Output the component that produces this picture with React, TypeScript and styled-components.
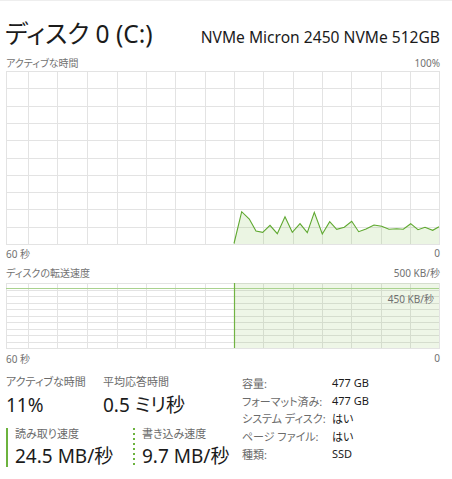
import React from "react";
import styled, { createGlobalStyle } from "styled-components";

const GlobalStyle = createGlobalStyle`
  html, body { margin: 0; padding: 0; background: #ffffff; }
  body {
    font-family: "Noto Sans", "Noto Sans CJK JP", sans-serif;
    font-feature-settings: "palt";
    color: #1b1b1b;
  }
`;

const GREEN = "#5ea82f";
const GREEN_BAR = "#6cb33e";
const GRID = "#e3e3e3";

const Page = styled.div`
  width: 452px;
  height: 479px;
  box-sizing: border-box;
  border-top: 1px solid #eeeeee;
  padding: 0 12px 0 6px;
  overflow: hidden;
`;

const Header = styled.div`
  height: 53px;
  box-sizing: border-box;
  padding-top: 16px;
  display: flex;
  justify-content: space-between;
  align-items: baseline;
`;

const Title = styled.div`
  font-size: 24.5px;
  line-height: 33px;
  margin-left: -1px;
`;

const Model = styled.div`
  font-size: 15.6px;
  line-height: 20px;
`;

const CaptionRow = styled.div<{ $h: number }>`
  height: ${(p) => p.$h}px;
  display: flex;
  justify-content: space-between;
  align-items: center;
  font-size: 10px;
  color: #717171;
`;

const ChartBox = styled.div<{ $h: number }>`
  position: relative;
  width: 434px;
  height: ${(p) => p.$h}px;
`;

const ChartSvg = styled.svg`
  display: block;
`;

const Overlay = styled.div`
  position: absolute;
  right: 6px;
  top: 9px;
  font-size: 10px;
  line-height: 14px;
  color: #707070;
`;

const Stats = styled.div`
  display: grid;
  grid-template-columns: 236px 1fr;
  padding-top: 6px;
`;

const LeftStats = styled.div`
  display: flex;
  flex-direction: column;
`;

const StatRow = styled.div<{ $first: number; $mt: number }>`
  display: grid;
  grid-template-columns: ${(p) => p.$first}px 1fr;
  margin-top: ${(p) => p.$mt}px;
`;

const Stat = styled.div<{ $bar?: "solid" | "dotted" }>`
  display: flex;
  flex-direction: column;
  ${(p) =>
    p.$bar
      ? `
    height: 39px;
    padding-left: 9px;
    background-image: ${
      p.$bar === "solid"
        ? `linear-gradient(${GREEN_BAR}, ${GREEN_BAR})`
        : `linear-gradient(to bottom, ${GREEN_BAR} 50%, transparent 50%)`
    };
    background-repeat: repeat-y;
    background-position: left top;
    background-size: ${p.$bar === "solid" ? "2px 100%" : "2px 5px"};
  `
      : ""}
`;

const StatLabel = styled.div<{ $lh: number }>`
  font-size: 11px;
  line-height: ${(p) => p.$lh}px;
  color: #6b6b6b;
  white-space: nowrap;
`;

const StatValue = styled.div<{ $lh: number }>`
  font-size: 19px;
  line-height: ${(p) => p.$lh}px;
  color: #1b1b1b;
  white-space: nowrap;
`;

const InfoGrid = styled.div`
  display: grid;
  grid-template-columns: 90px 1fr;
  grid-auto-rows: 17.7px;
  align-items: center;
  font-size: 11px;
  padding-top: 1px;
`;

const InfoKey = styled.div`
  color: #6b6b6b;
  white-space: nowrap;
`;

const InfoVal = styled.div`
  color: #1b1b1b;
  white-space: nowrap;
`;

const VLINES = [22, 51, 81, 111, 140, 169, 199, 228, 257, 287, 316, 345, 375, 404];

const RAW: [number, number][] = [
  [234, 243.5], [241.7, 211.7], [249.3, 219], [256, 231], [262.7, 232.3],
  [270, 225.3], [277.3, 233.7], [285, 216.7], [292.3, 232.3], [300, 223.7],
  [307.3, 232.7], [314.3, 212.3], [322.3, 234], [329.7, 221.7], [336.7, 229.3],
  [344.3, 227.3], [351.7, 221.3], [358.7, 231.7], [366, 229], [374, 225],
  [381.7, 226.3], [389, 229.3], [396.7, 228.7], [403.3, 229.3], [410.7, 223.7],
  [418, 229.7], [425, 227.3], [432.7, 230.3], [439, 226.7],
];

const Grid: React.FC<{ w: number; h: number; rows: number }> = ({ w, h, rows }) => {
  const step = (h - 1) / rows;
  return (
    <g stroke={GRID} strokeWidth={1} shapeRendering="crispEdges">
      {VLINES.map((x) => (
        <line key={`v${x}`} x1={x + 0.5} y1={0} x2={x + 0.5} y2={h} />
      ))}
      {Array.from({ length: rows - 1 }, (_, i) => {
        const y = Math.round(step * (i + 1)) + 0.5;
        return <line key={`h${i}`} x1={0} y1={y} x2={w} y2={y} />;
      })}
      <rect x={0.5} y={0.5} width={w - 1} height={h - 1} fill="none" />
    </g>
  );
};

const ActiveChart: React.FC = () => {
  const w = 434;
  const h = 174;
  const pts = RAW.map(([x, y]) => [x - 6, y - 71] as [number, number]);
  const line = pts.map(([x, y]) => `${x},${y}`).join(" ");
  const area = `${pts[0][0]},${h - 1} ${line} ${pts[pts.length - 1][0]},${h - 1}`;
  return (
    <ChartBox $h={h}>
      <ChartSvg width={w} height={h}>
        <Grid w={w} h={h} rows={10} />
        <polygon points={area} fill="rgba(120,185,70,0.15)" />
        <polyline points={line} fill="none" stroke={GREEN} strokeWidth={1.1} />
      </ChartSvg>
    </ChartBox>
  );
};

const TransferChart: React.FC = () => {
  const w = 434;
  const h = 66;
  return (
    <ChartBox $h={h}>
      <ChartSvg width={w} height={h}>
        <Grid w={w} h={h} rows={10} />
        <rect x={228} y={0} width={205} height={h - 1} fill="rgba(120,185,70,0.13)" />
        <line x1={0} y1={5.5} x2={w - 1} y2={5.5} stroke="#a9d28e" strokeWidth={1} />
        <line x1={228.5} y1={0} x2={228.5} y2={h - 1} stroke="#71b342" strokeWidth={1.2} />
      </ChartSvg>
      <Overlay>450 KB/秒</Overlay>
    </ChartBox>
  );
};

export default function App() {
  return (
    <>
      <GlobalStyle />
      <Page>
        <Header>
          <Title>ディスク 0 (C:)</Title>
          <Model>NVMe Micron 2450 NVMe 512GB</Model>
        </Header>
        <CaptionRow $h={17}>
          <span>アクティブな時間</span>
          <span>100%</span>
        </CaptionRow>
        <ActiveChart />
        <CaptionRow $h={16}>
          <span>60 秒</span>
          <span>0</span>
        </CaptionRow>
        <CaptionRow $h={22}>
          <span>ディスクの転送速度</span>
          <span>500 KB/秒</span>
        </CaptionRow>
        <TransferChart />
        <CaptionRow $h={18}>
          <span>60 秒</span>
          <span>0</span>
        </CaptionRow>
        <Stats>
          <LeftStats>
            <StatRow $first={97} $mt={0}>
              <Stat>
                <StatLabel $lh={18}>アクティブな時間</StatLabel>
                <StatValue $lh={28}>11%</StatValue>
              </Stat>
              <Stat>
                <StatLabel $lh={18}>平均応答時間</StatLabel>
                <StatValue $lh={28}>0.5 ミリ秒</StatValue>
              </Stat>
            </StatRow>
            <StatRow $first={127} $mt={9}>
              <Stat $bar="solid">
                <StatLabel $lh={11}>読み取り速度</StatLabel>
                <StatValue $lh={34}>24.5 MB/秒</StatValue>
              </Stat>
              <Stat $bar="dotted">
                <StatLabel $lh={11}>書き込み速度</StatLabel>
                <StatValue $lh={34}>9.7 MB/秒</StatValue>
              </Stat>
            </StatRow>
          </LeftStats>
          <InfoGrid>
            <InfoKey>容量:</InfoKey>
            <InfoVal>477 GB</InfoVal>
            <InfoKey>フォーマット済み:</InfoKey>
            <InfoVal>477 GB</InfoVal>
            <InfoKey>システム ディスク:</InfoKey>
            <InfoVal>はい</InfoVal>
            <InfoKey>ページ ファイル:</InfoKey>
            <InfoVal>はい</InfoVal>
            <InfoKey>種類:</InfoKey>
            <InfoVal>SSD</InfoVal>
          </InfoGrid>
        </Stats>
      </Page>
    </>
  );
}
